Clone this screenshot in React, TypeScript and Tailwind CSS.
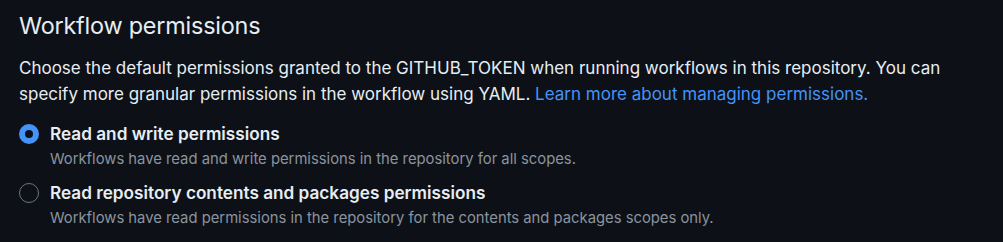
const options = [
  {
    title: "Read and write permissions",
    note: "Workflows have read and write permissions in the repository for all scopes.",
    checked: true,
  },
  {
    title: "Read repository contents and packages permissions",
    note: "Workflows have read permissions in the repository for the contents and packages scopes only.",
    checked: false,
  },
];

const App = () => {
  return (
    <div className="w-[1003px] h-[242px] bg-[#0d1117] text-[#e6edf3] px-[19px] pt-[8px] font-['Inter',_'Liberation_Sans',_sans-serif] overflow-hidden">
      <h2 className="text-[23.4px] leading-[36px] font-normal tracking-[-0.2px]">Workflow permissions</h2>
      <p className="mt-[11px] text-[17px] leading-[26px] max-w-[935px]">
        Choose the default permissions granted to the GITHUB_TOKEN when running workflows in this repository. You can
        specify more granular permissions in the workflow using YAML.{" "}
        <a href="#" className="text-[#4493f8]">Learn more about managing permissions.</a>
      </p>
      <div className="mt-[15px] flex flex-col gap-[9px]">
        {options.map((o) => (
          <label key={o.title} className="flex gap-[11px]">
            <span
              className={
                o.checked
                  ? "mt-[2px] w-[20px] h-[20px] shrink-0 rounded-full border-[6px] border-[#4493f8] bg-[#0d1117]"
                  : "mt-[2px] w-[20px] h-[20px] shrink-0 rounded-full border border-[#6e7681] bg-[#0d1117]"
              }
            />
            <span className="flex flex-col">
              <span className="text-[17.2px] leading-[24px] font-semibold">{o.title}</span>
              <span className="text-[14.8px] leading-[26px] text-[#8b949e]">{o.note}</span>
            </span>
          </label>
        ))}
      </div>
    </div>
  );
};

export default App;
